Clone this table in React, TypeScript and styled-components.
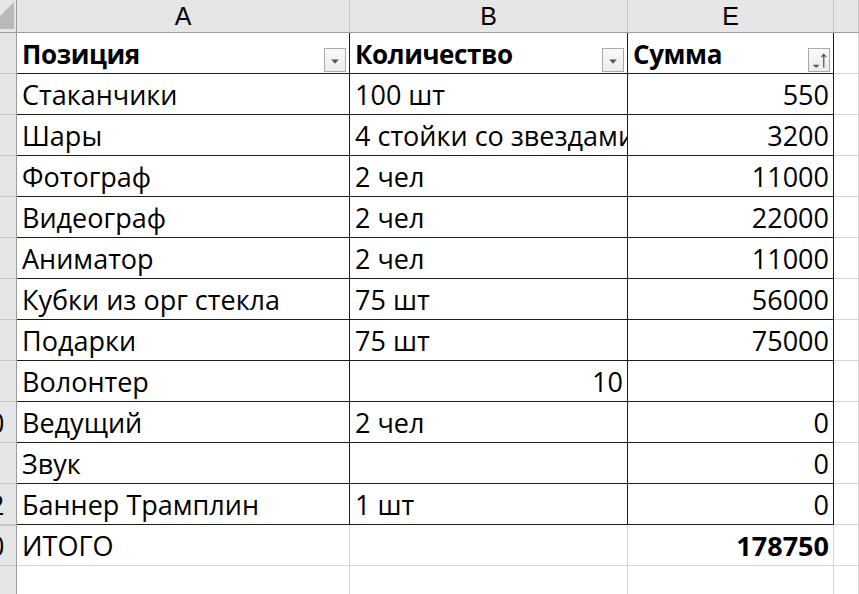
import React from 'react';
import styled, {createGlobalStyle} from 'styled-components';

const GlobalStyle = createGlobalStyle`
  html, body {
    margin: 0;
    padding: 0;
    background: #ffffff;
    overflow: hidden;
  }
  body {
    font-family: 'Open Sans', 'Noto Sans', sans-serif;
  }
`;

const DARK = '#1c1c1c';
const LIGHT = '#d4d4d4';
const HEAD_BG = '#e6e6e6';
const HEAD_LINE = '#c6c6c6';
const HEAD_EDGE = '#9d9d9d';

type Row = {
  num: number;
  a: string;
  b: string;
  e: string;
  bRight?: boolean;
};

const rows: Row[] = [
  {num: 2, a: 'Стаканчики', b: '100 шт', e: '550'},
  {num: 3, a: 'Шары', b: '4 стойки со звездами', e: '3200'},
  {num: 4, a: 'Фотограф', b: '2 чел', e: '11000'},
  {num: 5, a: 'Видеограф', b: '2 чел', e: '22000'},
  {num: 6, a: 'Аниматор', b: '2 чел', e: '11000'},
  {num: 7, a: 'Кубки из орг стекла', b: '75 шт', e: '56000'},
  {num: 8, a: 'Подарки', b: '75 шт', e: '75000'},
  {num: 9, a: 'Волонтер', b: '10', e: '', bRight: true},
  {num: 10, a: 'Ведущий', b: '2 чел', e: '0'},
  {num: 11, a: 'Звук', b: '', e: '0'},
  {num: 12, a: 'Баннер Трамплин', b: '1 шт', e: '0'},
];

const App: React.FC = () => {
  return (
    <>
      <GlobalStyle />
      <Sheet>
        <Corner>
          <svg width="16" height="32" viewBox="0 0 16 32">
            <polygon points="14,2 14,29 0,29 0,16" fill="#b9b9b9" />
          </svg>
        </Corner>
        <ColHeader>A</ColHeader>
        <ColHeader>B</ColHeader>
        <ColHeader>E</ColHeader>
        <ColHeader />

        <RowHeader>
          <RowNum>1</RowNum>
        </RowHeader>
        <HeadCell>
          <HeadLabel>Позиция</HeadLabel>
          <FilterButton />
        </HeadCell>
        <HeadCell>
          <HeadLabel>Количество</HeadLabel>
          <FilterButton />
        </HeadCell>
        <HeadCell>
          <HeadLabel>Сумма</HeadLabel>
          <FilterButton $sorted />
        </HeadCell>
        <Cell $light />

        {rows.map(r => (
          <React.Fragment key={r.num}>
            <RowHeader>
              <RowNum>{r.num}</RowNum>
            </RowHeader>
            <Cell>{r.a}</Cell>
            <Cell $right={r.bRight}>{r.b}</Cell>
            <Cell $right>{r.e}</Cell>
            <Cell $light />
          </React.Fragment>
        ))}

        <RowHeader $hidden>
          <RowNum>20</RowNum>
        </RowHeader>
        <Cell $light>ИТОГО</Cell>
        <Cell $light />
        <Cell $light $right $bold>
          178750
        </Cell>
        <Cell $light />

        <RowHeader>
          <RowNum>21</RowNum>
        </RowHeader>
        <Cell $light />
        <Cell $light />
        <Cell $light />
        <Cell $light />
      </Sheet>
    </>
  );
};

const FilterButton: React.FC<{$sorted?: boolean}> = ({$sorted}) => (
  <FilterBox>
    {$sorted ? (
      <svg width="21" height="23" viewBox="0 0 21 23">
        <polygon points="4,16 11,16 7.5,19.5" fill="#555555" />
        <path d="M15.5 19 V5 M13 8 L15.5 5 L18 8" stroke="#555555" strokeWidth="1.3" fill="none" />
      </svg>
    ) : (
      <svg width="21" height="23" viewBox="0 0 21 23">
        <polygon points="6.5,10.5 14.5,10.5 10.5,15" fill="#555555" />
      </svg>
    )}
  </FilterBox>
);

export default App;

const Sheet = styled.div`
  display: grid;
  grid-template-columns: 17px 333px 278px 206px 1fr;
  grid-template-rows: 33px repeat(14, 41px);
  width: 859px;
  height: 594px;
  overflow: hidden;
  color: #000;
  font-size: 27px;
`;

const Corner = styled.div`
  box-sizing: border-box;
  background: ${HEAD_BG};
  border-right: 1px solid ${HEAD_EDGE};
  border-bottom: 1px solid ${HEAD_EDGE};
  overflow: hidden;
  display: flex;
  justify-content: flex-end;
`;

const ColHeader = styled.div`
  box-sizing: border-box;
  background: ${HEAD_BG};
  border-right: 1px solid ${HEAD_LINE};
  border-bottom: 1px solid ${HEAD_EDGE};
  display: flex;
  align-items: center;
  justify-content: center;
  font-family: 'Liberation Sans', Arial, sans-serif;
  font-size: 25px;
  line-height: normal;
  padding-top: 1px;
`;

const RowHeader = styled.div<{$hidden?: boolean}>`
  box-sizing: border-box;
  background: ${HEAD_BG};
  border-right: 1px solid ${HEAD_EDGE};
  border-bottom: 1px solid ${HEAD_LINE};
  border-top: ${p => (p.$hidden ? `2px solid ${HEAD_LINE}` : 'none')};
  margin-top: ${p => (p.$hidden ? '-1px' : '0')};
  overflow: hidden;
  display: flex;
  align-items: flex-end;
  padding-bottom: 1px;
`;

const RowNum = styled.span`
  flex: none;
  width: 44px;
  margin-left: -33px;
  text-align: center;
  line-height: normal;
`;

const Cell = styled.div<{$right?: boolean; $bold?: boolean; $light?: boolean}>`
  box-sizing: border-box;
  border-right: 1px solid ${p => (p.$light ? LIGHT : DARK)};
  border-bottom: 1px solid ${p => (p.$light ? LIGHT : DARK)};
  padding: 0 4px 1px 5px;
  display: flex;
  align-items: flex-end;
  justify-content: ${p => (p.$right ? 'flex-end' : 'flex-start')};
  font-weight: ${p => (p.$bold ? 700 : 400)};
  white-space: nowrap;
  overflow: hidden;
  line-height: normal;
`;

const HeadCell = styled.div`
  box-sizing: border-box;
  border-right: 1px solid ${DARK};
  border-bottom: 1px solid ${DARK};
  padding: 0 3px 1px 5px;
  display: flex;
  align-items: flex-end;
  justify-content: space-between;
  overflow: hidden;
  line-height: normal;
`;

const HeadLabel = styled.span`
  font-size: 26px;
  font-weight: 700;
  letter-spacing: -0.4px;
  white-space: nowrap;
`;

const FilterBox = styled.span`
  flex: none;
  align-self: flex-end;
  box-sizing: border-box;
  width: 22px;
  height: 24px;
  border: 1px solid #aaaaaa;
  background: linear-gradient(#fafafa, #ececec);
  display: flex;
  align-items: center;
  justify-content: center;
`;
